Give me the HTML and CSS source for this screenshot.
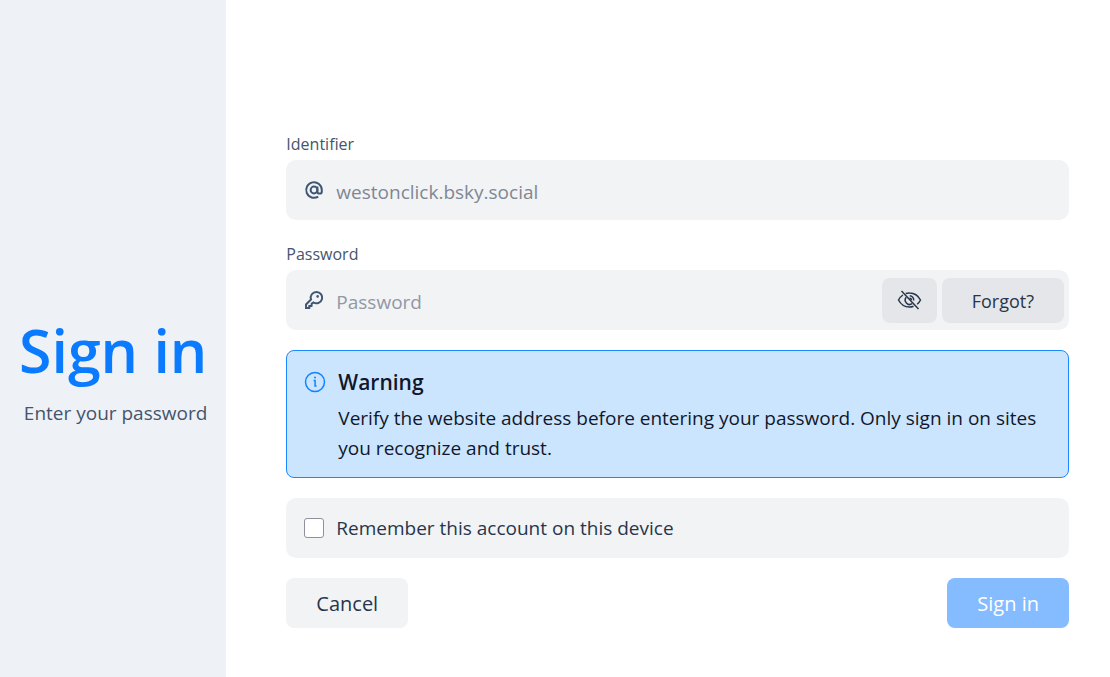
FILE: index.html
```html
<!DOCTYPE html>
<html lang="en">
<head>
<meta charset="UTF-8">
<meta name="viewport" content="width=device-width, initial-scale=1.0">
<title>Sign in</title>
<link rel="stylesheet" href="styles.css">
</head>
<body>

<div class="layout">
  <header class="sidebar">
    <h1>Sign in</h1>
    <p>Enter your password</p>
  </header>

  <main class="content">
    <form id="signInForm">
      <div class="group">
        <label class="caption" for="identifier">Identifier</label>
        <div class="field">
          <svg class="icon" viewBox="0 0 20 20" aria-hidden="true">
            <circle cx="10" cy="10" r="3.4"/>
            <path d="M13.4 6.6V11.4a2.2 2.2 0 0 0 4.4 0V10a7.8 7.8 0 1 0-3.6 6.6"/>
          </svg>
          <input type="text" id="identifier" value="westonclick.bsky.social" disabled>
        </div>
      </div>

      <div class="group">
        <label class="caption" for="password">Password</label>
        <div class="field">
          <svg class="icon" viewBox="0 0 20 20" aria-hidden="true">
            <path d="M12.4 1.9a5.7 5.7 0 0 0-5.4 7.5L2 14.5v3.6h3.3v-2.2h2.2l.2-2.3 1.9-1.1a5.7 5.7 0 1 0 2.8-10.6z"/>
            <circle class="dot" cx="13.6" cy="6.4" r="1.3"/>
          </svg>
          <input type="password" id="password" placeholder="Password" required>
          <button type="button" id="toggle" class="inner-button eye" aria-label="Show password">
            <svg viewBox="0 0 24 24" aria-hidden="true">
              <path d="M8.2 5.5A11 11 0 0 1 12 5c5 0 8.8 2.8 11 7-.8 1.6-1.9 3-3.3 4.2M16 18.2A11 11 0 0 1 12 19c-5 0-8.8-2.8-11-7 1-2 2.5-3.7 4.4-5"/>
              <path d="M12.2 7.7A4.3 4.3 0 0 1 16.2 12.5M14.6 15.7A4.4 4.4 0 0 1 8.7 9.3M12 10.2a2 2 0 0 1 1.9 2"/>
              <path d="M4 3l17 18"/>
            </svg>
          </button>
          <button type="button" class="inner-button">Forgot?</button>
        </div>
      </div>

      <div class="notice" role="alert">
        <svg class="info" viewBox="0 0 22 22" aria-hidden="true">
          <circle cx="11" cy="11" r="9.5"/>
          <path d="M9.6 9.6h1.5v5.5h1.5"/>
          <circle class="dot" cx="11" cy="6.6" r="1"/>
        </svg>
        <div>
          <h2>Warning</h2>
          <p>Verify the website address before entering your password. Only sign in on sites you recognize and trust.</p>
        </div>
      </div>

      <div class="field remember">
        <input type="checkbox" id="remember">
        <label for="remember">Remember this account on this device</label>
      </div>

      <div class="actions">
        <button type="button" class="button">Cancel</button>
        <button type="submit" class="button primary" id="submit" disabled>Sign in</button>
      </div>
    </form>
  </main>
</div>

<script>
  const password = document.getElementById('password');

  document.getElementById('toggle').addEventListener('click', function() {
    password.type = password.type === 'password' ? 'text' : 'password';
  });

  password.addEventListener('input', function() {
    document.getElementById('submit').disabled = password.value === '';
  });
</script>

</body>
</html>
```

FILE: styles.css
```css
* {
  box-sizing: border-box;
}
body {
  margin: 0;
  font-family: "Segoe UI", "Open Sans", sans-serif;
  font-size: 19px;
  line-height: 30px;
  color: #27364b;
  background-color: #fff;
}
h1,
h2,
p {
  margin: 0;
}
.layout {
  display: flex;
  min-height: 100vh;
}
.sidebar {
  display: flex;
  flex-direction: column;
  justify-content: center;
  align-items: flex-end;
  padding: 70px 19px 0;
  background-color: #eef1f6;
  color: #45556c;
}
.sidebar h1 {
  margin-bottom: 18px;
  font-size: 59px;
  font-weight: 600;
  line-height: 60px;
  color: #0a7aff;
}
.content {
  flex: 1;
  padding: 130px 41px 40px 60px;
}
.group {
  margin-bottom: 20px;
}
.caption {
  display: block;
  padding-bottom: 2px;
  font-size: 16px;
  line-height: 28px;
  color: #45556c;
}
.field {
  display: flex;
  align-items: center;
  gap: 5px;
  height: 60px;
  padding: 0 5px 0 18px;
  border-radius: 10px;
  background-color: #f2f3f5;
}
.icon {
  flex: none;
  width: 20px;
  height: 20px;
  margin-right: 7px;
}
svg {
  fill: none;
  stroke: #405672;
  stroke-width: 2;
}
.icon .dot {
  fill: #405672;
  stroke: none;
}
.field input[type="text"],
.field input[type="password"] {
  flex: 1;
  min-width: 0;
  padding: 4px 0 0;
  border: none;
  outline: none;
  background: none;
  font: inherit;
  color: #7f8794;
}
.field input::placeholder {
  color: #9098a4;
  opacity: 1;
}
button {
  border: none;
  font: inherit;
  color: #27364b;
  cursor: pointer;
}
.inner-button {
  height: 45px;
  padding: 2px 30px 0;
  border-radius: 8px;
  background-color: #e4e6ea;
  font-size: 18px;
}
.eye {
  padding: 0 15px;
}
.eye svg {
  display: block;
  width: 25px;
  height: 24px;
  stroke: #27364b;
  stroke-width: 1.5;
}
.notice {
  display: flex;
  gap: 12px;
  margin-bottom: 20px;
  padding: 16px 17px 14px;
  border: 1px solid #1a88ff;
  border-radius: 8px;
  background-color: #cce5ff;
  color: #10182b;
}
.notice h2 {
  margin-bottom: 6px;
  font-size: 21px;
  font-weight: 600;
  line-height: 30px;
}
.info {
  flex: none;
  width: 22px;
  height: 22px;
  margin-top: 4px;
  stroke: #1083fe;
  stroke-width: 1.5;
}
.info .dot {
  fill: #1083fe;
  stroke: none;
}
.remember {
  gap: 12px;
  margin-bottom: 20px;
}
.remember input {
  appearance: none;
  width: 20px;
  height: 20px;
  margin: 0;
  border: 1px solid #8f8f9d;
  border-radius: 3px;
  background-color: #fff;
}
.remember input:checked {
  background-color: #0a7aff;
}
.actions {
  display: flex;
  justify-content: space-between;
}
.button {
  height: 50px;
  padding: 2px 30px 0;
  border-radius: 8px;
  background-color: #f2f3f5;
  font-size: 20px;
}
.primary {
  background-color: #0a7aff;
  color: #fff;
}
.primary:disabled {
  background-color: #85bbff;
  cursor: default;
}
```
